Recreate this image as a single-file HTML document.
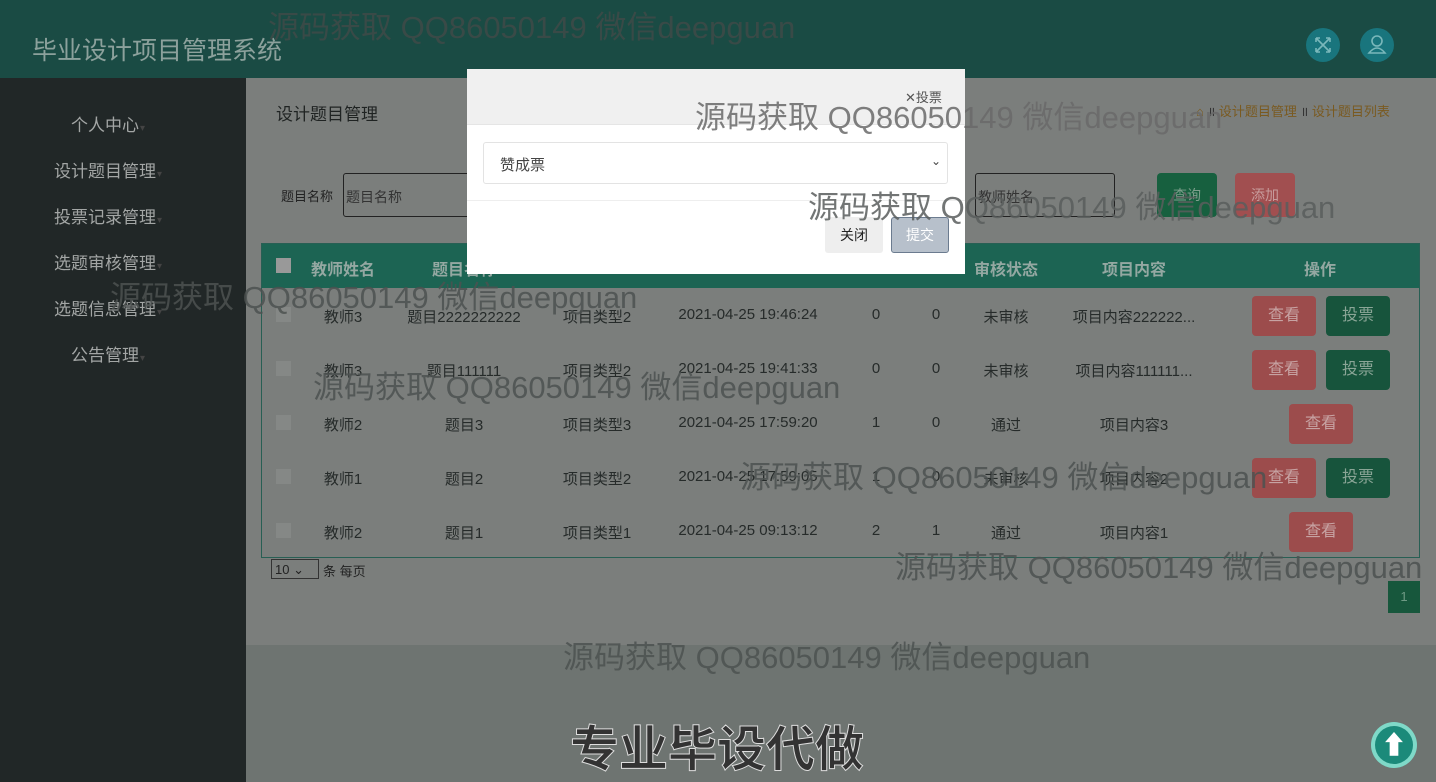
<!DOCTYPE html>
<html><head><meta charset="utf-8"><style>
*{margin:0;padding:0;box-sizing:border-box}
body{width:1436px;height:782px;overflow:hidden;position:relative;background:#7b7e7c;font-family:"Liberation Sans","Noto Sans CJK SC",sans-serif;}
.abs{position:absolute}
#hdr{left:0;top:0;width:1436px;height:78px;background:#1a4b44}
#side{left:0;top:78px;width:246px;height:704px;background:#212727}
.nav{position:absolute;left:0;width:216px;text-align:center;color:#a3a6a5;font-size:17px}
.nav:after{content:"▾";font-size:10px;color:#444;margin-left:1px}
#bottom{left:246px;top:645px;width:1190px;height:137px;background:#6e7471}
.wm{position:absolute;font-size:31px;color:#4d5251;white-space:nowrap;opacity:.85}
.th{left:261px;top:243px;width:1159px;height:45px;background:#1c6453}
.tbl{left:261px;top:243px;width:1159px;height:315px;border:1px solid #285f54}
.c{position:absolute;font-size:15px;color:#262b2a;transform:translateX(-50%);white-space:nowrap}
.cb{position:absolute;left:276px;width:15px;height:15px;background:#858886}
.btn{position:absolute;width:64px;height:40px;border-radius:4px;color:#c7a3a3;font-size:16px;text-align:center;line-height:40px}
.r{background:#9c4c4c}.g{background:#17543c;color:#8aa596}
.hc{position:absolute;top:256px;color:#94a8a2;font-weight:bold;font-size:16px;transform:translateX(-50%)}
</style></head><body>
<div id="hdr" class="abs"></div>
<div class="abs" style="left:32px;top:31px;font-size:25px;color:#8ca19c">毕业设计项目管理系统</div>
<div class="abs" style="left:1306px;top:28px;width:34px;height:34px;border-radius:50%;background:#19757d"><svg width="34" height="34" fill="none" stroke="#7ab8bb" stroke-width="1.6"><path d="M10 10 L24 24 M24 10 L10 24 M10 10 h4 M10 10 v4 M24 24 h-4 M24 24 v-4 M24 10 h-4 M24 10 v4 M10 24 h4 M10 24 v-4"/></svg></div>
<div class="abs" style="left:1360px;top:28px;width:34px;height:34px;border-radius:50%;background:#19757d"><svg width="34" height="34"><circle cx="17" cy="13" r="5" fill="none" stroke="#7ab8bb" stroke-width="1.6"/><path d="M9 25 Q17 15 25 25 Z" fill="none" stroke="#7ab8bb" stroke-width="1.6"/></svg></div>
<div id="side" class="abs"></div>
<div class="nav" style="top:111px">个人中心</div>
<div class="nav" style="top:157px">设计题目管理</div>
<div class="nav" style="top:203px">投票记录管理</div>
<div class="nav" style="top:249px">选题审核管理</div>
<div class="nav" style="top:295px">选题信息管理</div>
<div class="nav" style="top:341px">公告管理</div>
<div id="bottom" class="abs"></div>
<div class="abs" style="left:276px;top:100px;font-size:17px;color:#1f2322">设计题目管理</div>
<div class="abs" style="left:1196px;top:101px;font-size:13px;color:#7a5a20">⌂ <span style="color:#333">॥</span> 设计题目管理 <span style="color:#333">॥</span> 设计题目列表</div>
<div class="abs" style="left:281px;top:186px;font-size:13px;color:#222">题目名称</div>
<div class="abs" style="left:343px;top:173px;width:140px;height:44px;border:1px solid #222;border-radius:3px;font-size:14px;color:#333;padding:13px 0 0 2px">题目名称</div>
<div class="abs" style="left:975px;top:173px;width:140px;height:44px;border:1px solid #222;border-radius:3px;font-size:14px;color:#333;padding:13px 0 0 2px">教师姓名</div>
<div class="abs" style="left:1157px;top:173px;width:60px;height:44px;border-radius:4px;background:#17603f;color:#7e9f8c;text-align:center;line-height:44px;font-size:14px">查询</div>
<div class="abs" style="left:1235px;top:173px;width:60px;height:44px;border-radius:4px;background:#a14f50;color:#c79c9c;text-align:center;line-height:44px;font-size:14px">添加</div>
<div class="abs th"></div>
<div class="abs tbl"></div>
<div class="cb" style="top:258px;background:#999"></div>
<div class="hc" style="left:343px">教师姓名</div><div class="hc" style="left:464px">题目名称</div>
<div class="hc" style="left:1006px">审核状态</div><div class="hc" style="left:1134px">项目内容</div><div class="hc" style="left:1320px">操作</div>
<div class="cb" style="top:307px"></div><div class="c" style="left:343px;top:306px">教师3</div><div class="c" style="left:464px;top:306px">题目2222222222</div><div class="c" style="left:597px;top:306px">项目类型2</div><div class="c" style="left:748px;top:306px">2021-04-25 19:46:24</div><div class="c" style="left:876px;top:306px">0</div><div class="c" style="left:936px;top:306px">0</div><div class="c" style="left:1006px;top:306px">未审核</div><div class="c" style="left:1134px;top:306px">项目内容222222...</div>
<div class="btn r" style="left:1252px;top:296px">查看</div><div class="btn g" style="left:1326px;top:296px">投票</div>
<div class="cb" style="top:361px"></div><div class="c" style="left:343px;top:360px">教师3</div><div class="c" style="left:464px;top:360px">题目111111</div><div class="c" style="left:597px;top:360px">项目类型2</div><div class="c" style="left:748px;top:360px">2021-04-25 19:41:33</div><div class="c" style="left:876px;top:360px">0</div><div class="c" style="left:936px;top:360px">0</div><div class="c" style="left:1006px;top:360px">未审核</div><div class="c" style="left:1134px;top:360px">项目内容111111...</div>
<div class="btn r" style="left:1252px;top:350px">查看</div><div class="btn g" style="left:1326px;top:350px">投票</div>
<div class="cb" style="top:415px"></div><div class="c" style="left:343px;top:414px">教师2</div><div class="c" style="left:464px;top:414px">题目3</div><div class="c" style="left:597px;top:414px">项目类型3</div><div class="c" style="left:748px;top:414px">2021-04-25 17:59:20</div><div class="c" style="left:876px;top:414px">1</div><div class="c" style="left:936px;top:414px">0</div><div class="c" style="left:1006px;top:414px">通过</div><div class="c" style="left:1134px;top:414px">项目内容3</div>
<div class="btn r" style="left:1289px;top:404px">查看</div>
<div class="cb" style="top:469px"></div><div class="c" style="left:343px;top:468px">教师1</div><div class="c" style="left:464px;top:468px">题目2</div><div class="c" style="left:597px;top:468px">项目类型2</div><div class="c" style="left:748px;top:468px">2021-04-25 17:59:05</div><div class="c" style="left:876px;top:468px">1</div><div class="c" style="left:936px;top:468px">0</div><div class="c" style="left:1006px;top:468px">未审核</div><div class="c" style="left:1134px;top:468px">项目内容2</div>
<div class="btn r" style="left:1252px;top:458px">查看</div><div class="btn g" style="left:1326px;top:458px">投票</div>
<div class="cb" style="top:523px"></div><div class="c" style="left:343px;top:522px">教师2</div><div class="c" style="left:464px;top:522px">题目1</div><div class="c" style="left:597px;top:522px">项目类型1</div><div class="c" style="left:748px;top:522px">2021-04-25 09:13:12</div><div class="c" style="left:876px;top:522px">2</div><div class="c" style="left:936px;top:522px">1</div><div class="c" style="left:1006px;top:522px">通过</div><div class="c" style="left:1134px;top:522px">项目内容1</div>
<div class="btn r" style="left:1289px;top:512px">查看</div>
<div class="abs" style="left:271px;top:559px;width:48px;height:20px;border:1px solid #333;font-size:13px;padding:2px 3px;color:#222">10 ⌄</div>
<div class="abs" style="left:323px;top:561px;font-size:13px;color:#222">条 每页</div>
<div class="abs" style="left:1388px;top:581px;width:32px;height:32px;background:#17573c;color:#6f9a85;font-size:13px;text-align:center;line-height:32px">1</div>
<div class="abs" style="left:1371px;top:722px;width:46px;height:46px;border-radius:50%;background:#7fd9c8"><div style="margin:4px;width:38px;height:38px;border-radius:50%;background:#1b8a7a;color:#fff;text-align:center;line-height:38px;font-size:26px;font-weight:bold">⬆</div></div>
<div class="abs" style="left:570px;top:710px;font-size:49px;font-weight:bold;color:#333;-webkit-text-stroke:1px #ddd">专业毕设代做</div>
<div class="abs" style="left:467px;top:69px;width:498px;height:205px;background:#fff"></div>
<div class="abs" style="left:467px;top:69px;width:498px;height:56px;background:#f0f0f0;border-bottom:1px solid #e5e5e5"></div>
<div class="abs" style="left:905px;top:87px;font-size:13px;color:#555">✕投票</div>
<div class="abs" style="left:483px;top:142px;width:465px;height:42px;border:1px solid #e3e3e3;border-radius:3px;font-size:15px;color:#444;padding:11px 0 0 16px">赞成票<span style="position:absolute;right:6px;top:11px;font-size:12px">⌄</span></div>
<div class="abs" style="left:467px;top:200px;width:498px;height:1px;background:#eee"></div>
<div class="abs" style="left:825px;top:217px;width:58px;height:36px;background:#eee;border-radius:3px;font-size:14px;color:#222;text-align:center;line-height:36px">关闭</div>
<div class="abs" style="left:891px;top:217px;width:58px;height:36px;background:#b7c0cb;border:1px solid #6b7b8f;border-radius:3px;font-size:14px;color:#fff;text-align:center;line-height:34px">提交</div>
<div class="wm" style="left:268px;top:2px;color:#3f4a48">源码获取 QQ86050149 微信deepguan</div>
<div class="wm" style="left:695px;top:92px;color:#6a6a6a">源码获取 QQ86050149 微信deepguan</div>
<div class="wm" style="left:808px;top:182px;color:#5a5e5d">源码获取 QQ86050149 微信deepguan</div>
<div class="wm" style="left:110px;top:272px">源码获取 QQ86050149 微信deepguan</div>
<div class="wm" style="left:313px;top:362px">源码获取 QQ86050149 微信deepguan</div>
<div class="wm" style="left:740px;top:452px">源码获取 QQ86050149 微信deepguan</div>
<div class="wm" style="left:895px;top:542px">源码获取 QQ86050149 微信deepguan</div>
<div class="wm" style="left:563px;top:632px">源码获取 QQ86050149 微信deepguan</div>
</body></html>
